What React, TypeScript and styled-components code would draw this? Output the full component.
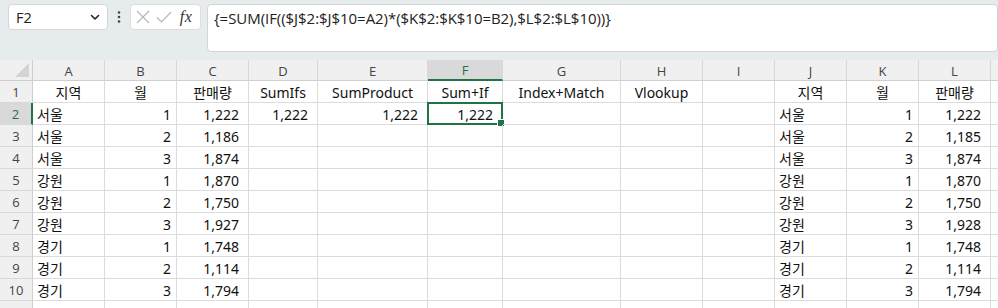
import React from "react";
import styled, { createGlobalStyle, css } from "styled-components";

const GREEN = "#217346";
const CELL_FONT = `"Noto Sans", "Noto Sans CJK KR", sans-serif`;

const Global = createGlobalStyle`
  html, body { margin: 0; padding: 0; background: #ffffff; }
  body { width: 998px; height: 308px; overflow: hidden; font-family: ${CELL_FONT}; }
`;

const Page = styled.div`
  width: 998px;
  height: 308px;
  overflow: hidden;
  display: flex;
  flex-direction: column;
`;

const Toolbar = styled.div`
  height: 60px;
  box-sizing: border-box;
  background: #e6ebee;
  padding: 4px 0 0 8px;
  display: flex;
  align-items: flex-start;
  flex-shrink: 0;
`;

const NameBox = styled.div`
  width: 101px;
  height: 26px;
  box-sizing: border-box;
  background: #fff;
  border: 1px solid #d6d6d6;
  border-radius: 4px;
  display: flex;
  align-items: center;
  justify-content: space-between;
  padding: 0 6px 0 7px;
  font-family: "Open Sans", "Noto Sans", sans-serif;
  font-size: 14.5px;
  color: #222;
`;

const Dots = styled.div`
  width: 22px;
  height: 26px;
  display: flex;
  align-items: center;
  justify-content: center;
`;

const ActionBox = styled.div`
  width: 72px;
  height: 26px;
  box-sizing: border-box;
  background: #fff;
  border: 1px solid #dedede;
  border-radius: 4px;
  display: flex;
  align-items: center;
  padding-left: 5px;
  gap: 6px;
`;

const Fx = styled.span`
  font-family: "Liberation Serif", "DejaVu Serif", serif;
  font-style: italic;
  font-size: 16px;
  color: #333;
  margin-left: 2px;
  letter-spacing: 0.5px;
`;

const FormulaBox = styled.div`
  margin-left: 6px;
  width: 800px;
  height: 48px;
  box-sizing: border-box;
  background: #fff;
  border: 1px solid #d4d4d4;
  border-radius: 4px;
  padding: 3px 0 0 6px;
  font-family: "Open Sans", "Noto Sans", sans-serif;
  font-size: 15px;
  color: #222;
  white-space: nowrap;
  letter-spacing: -0.05px;
`;

const Sheet = styled.div`
  display: grid;
  grid-template-columns: 33px 72px 72px 72px 69px 110px 75px 118px 82px 72px 72px 72px 72px 1fr;
  grid-template-rows: 21px repeat(11, 22px);
  background: #fff;
`;

const Corner = styled.div`
  background: #f0f0f0;
  border-right: 1px solid #cfcfcf;
  border-bottom: 1px solid #cfcfcf;
  display: flex;
  align-items: flex-end;
  justify-content: flex-end;
  padding: 0 3px 3px 0;
  box-sizing: border-box;
`;

const Triangle = styled.div`
  width: 0;
  height: 0;
  border-left: 14px solid transparent;
  border-bottom: 14px solid #d4d4d4;
`;

const ColHead = styled.div<{ $active?: boolean }>`
  background: #f0f0f0;
  border-right: 1px solid #d8d8d8;
  border-bottom: 1px solid #cfcfcf;
  box-sizing: border-box;
  display: flex;
  align-items: center;
  justify-content: center;
  font-family: "Open Sans", "Noto Sans", sans-serif;
  font-size: 13px;
  color: #444;
  padding-top: 1px;
  ${(p) =>
    p.$active &&
    css`
      background: #d9d9d9;
      color: ${GREEN};
      border-bottom: 2px solid ${GREEN};
    `}
`;

const RowHead = styled.div<{ $active?: boolean }>`
  background: #f0f0f0;
  border-right: 1px solid #cfcfcf;
  border-bottom: 1px solid #d8d8d8;
  box-sizing: border-box;
  display: flex;
  align-items: center;
  justify-content: center;
  font-family: "Open Sans", "Noto Sans", sans-serif;
  font-size: 13px;
  color: #444;
  padding-top: 1px;
  ${(p) =>
    p.$active &&
    css`
      background: #d9d9d9;
      color: ${GREEN};
      border-right: 2px solid ${GREEN};
    `}
`;

const Cell = styled.div<{ $align: "left" | "right" | "center"; $pad: number }>`
  position: relative;
  border-right: 1px solid #dcdcdc;
  border-bottom: 1px solid #dcdcdc;
  box-sizing: border-box;
  display: flex;
  align-items: center;
  justify-content: ${(p) =>
    p.$align === "left" ? "flex-start" : p.$align === "right" ? "flex-end" : "center"};
  padding: 1px ${(p) => (p.$align === "right" ? p.$pad : 3)}px 0
    ${(p) => (p.$align === "left" ? 4 : 3)}px;
  font-family: ${CELL_FONT};
  font-size: 14px;
  color: #111;
  white-space: nowrap;
  overflow: visible;
`;

const Selection = styled.div`
  position: absolute;
  left: -1px;
  top: -1px;
  right: -1px;
  bottom: -1px;
  border: 2px solid ${GREEN};
  pointer-events: none;
`;

const Handle = styled.div`
  position: absolute;
  right: -4px;
  bottom: -4px;
  width: 6px;
  height: 6px;
  background: ${GREEN};
  border: 1px solid #fff;
`;

const COLS = ["A", "B", "C", "D", "E", "F", "G", "H", "I", "J", "K", "L", ""];

const regions = ["서울", "서울", "서울", "강원", "강원", "강원", "경기", "경기", "경기"];
const months = ["1", "2", "3", "1", "2", "3", "1", "2", "3"];
const salesC = ["1,222", "1,186", "1,874", "1,870", "1,750", "1,927", "1,748", "1,114", "1,794"];
const salesL = ["1,222", "1,185", "1,874", "1,870", "1,750", "1,928", "1,748", "1,114", "1,794"];

type CellDef = { text: string; align: "left" | "right" | "center"; pad: number };

function buildRows(): CellDef[][] {
  const header = ["지역", "월", "판매량", "SumIfs", "SumProduct", "Sum+If", "Index+Match", "Vlookup", "", "지역", "월", "판매량", ""];
  const rows: CellDef[][] = [header.map((t) => ({ text: t, align: "center", pad: 3 }))];
  for (let i = 0; i < 10; i++) {
    const r: CellDef[] = [];
    const has = i < 9;
    r.push({ text: has ? regions[i] : "", align: "left", pad: 3 });
    r.push({ text: has ? months[i] : "", align: "right", pad: 5 });
    r.push({ text: has ? salesC[i] : "", align: "right", pad: 9 });
    r.push({ text: i === 0 ? "1,222" : "", align: "right", pad: 9 });
    r.push({ text: i === 0 ? "1,222" : "", align: "right", pad: 9 });
    r.push({ text: i === 0 ? "1,222" : "", align: "right", pad: 9 });
    r.push({ text: "", align: "left", pad: 3 });
    r.push({ text: "", align: "left", pad: 3 });
    r.push({ text: "", align: "left", pad: 3 });
    r.push({ text: has ? regions[i] : "", align: "left", pad: 3 });
    r.push({ text: has ? months[i] : "", align: "right", pad: 5 });
    r.push({ text: has ? salesL[i] : "", align: "right", pad: 9 });
    r.push({ text: "", align: "left", pad: 3 });
    rows.push(r);
  }
  return rows;
}

const ChevronDown = () => (
  <svg width="12" height="12" viewBox="0 0 12 12">
    <path d="M2.5 4.5 L6 8 L9.5 4.5" fill="none" stroke="#222" strokeWidth="1.6" strokeLinecap="round" strokeLinejoin="round" />
  </svg>
);

const VDots = () => (
  <svg width="4" height="14" viewBox="0 0 4 14">
    <circle cx="2" cy="2.5" r="1.3" fill="#444" />
    <circle cx="2" cy="7" r="1.3" fill="#444" />
    <circle cx="2" cy="11.5" r="1.3" fill="#444" />
  </svg>
);

const XIcon = () => (
  <svg width="14" height="14" viewBox="0 0 14 14">
    <path d="M1 1 L13 13 M13 1 L1 13" stroke="#b8b8b8" strokeWidth="1.2" fill="none" />
  </svg>
);

const CheckIcon = () => (
  <svg width="16" height="14" viewBox="0 0 16 14">
    <path d="M1 7.5 L5.5 12 L15 2" stroke="#b8b8b8" strokeWidth="1.2" fill="none" />
  </svg>
);

export default function App() {
  const rows = buildRows();
  return (
    <Page>
      <Global />
      <Toolbar>
        <NameBox>
          <span>F2</span>
          <ChevronDown />
        </NameBox>
        <Dots>
          <VDots />
        </Dots>
        <ActionBox>
          <XIcon />
          <CheckIcon />
          <Fx>fx</Fx>
        </ActionBox>
        <FormulaBox>{"{=SUM(IF(($J$2:$J$10=A2)*($K$2:$K$10=B2),$L$2:$L$10))}"}</FormulaBox>
      </Toolbar>
      <Sheet>
        <Corner>
          <Triangle />
        </Corner>
        {COLS.map((c, i) => (
          <ColHead key={"h" + i} $active={c === "F"}>
            {c}
          </ColHead>
        ))}
        {rows.map((r, ri) => (
          <React.Fragment key={"r" + ri}>
            <RowHead $active={ri === 1}>{ri < 10 ? ri + 1 : ""}</RowHead>
            {r.map((cell, ci) => (
              <Cell key={ci} $align={cell.align} $pad={cell.pad}>
                {cell.text}
                {ri === 1 && ci === 5 && (
                  <Selection>
                    <Handle />
                  </Selection>
                )}
              </Cell>
            ))}
          </React.Fragment>
        ))}
      </Sheet>
    </Page>
  );
}
